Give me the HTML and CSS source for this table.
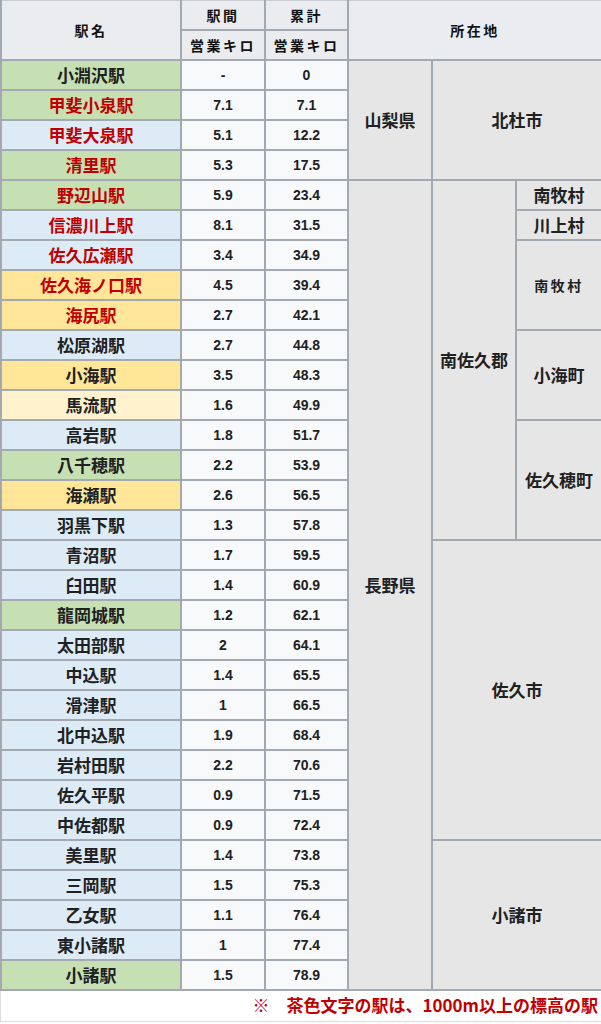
FILE: index.html
```html
<!DOCTYPE html>
<html lang="ja">
<head>
<meta charset="utf-8">
<title>小海線 駅一覧</title>
<link rel="stylesheet" href="styles.css">
</head>
<body>
<div class="wrap">
<table class="stations">
  <colgroup>
    <col class="c-name"><col class="c-num"><col class="c-num2"><col class="c-pref"><col class="c-city"><col class="c-town">
  </colgroup>
  <thead>
    <tr>
      <th rowspan="2" class="h">駅名</th>
      <th class="h">駅間</th>
      <th class="h">累計</th>
      <th rowspan="2" colspan="3" class="h wide">所在地</th>
    </tr>
    <tr>
      <th class="h">営業キロ</th>
      <th class="h">営業キロ</th>
    </tr>
  </thead>
  <tbody>
    <tr><td class="st g">小淵沢駅</td><td class="n">-</td><td class="n">0</td><td rowspan="4" class="loc">山梨県</td><td rowspan="4" colspan="2" class="loc">北杜市</td></tr>
    <tr><td class="st g red">甲斐小泉駅</td><td class="n">7.1</td><td class="n">7.1</td></tr>
    <tr><td class="st b red">甲斐大泉駅</td><td class="n">5.1</td><td class="n">12.2</td></tr>
    <tr><td class="st g red">清里駅</td><td class="n">5.3</td><td class="n">17.5</td></tr>
    <tr><td class="st g red">野辺山駅</td><td class="n">5.9</td><td class="n">23.4</td><td rowspan="27" class="loc">長野県</td><td rowspan="12" class="loc">南佐久郡</td><td class="loc">南牧村</td></tr>
    <tr><td class="st b red">信濃川上駅</td><td class="n">8.1</td><td class="n">31.5</td><td class="loc">川上村</td></tr>
    <tr><td class="st b red">佐久広瀬駅</td><td class="n">3.4</td><td class="n">34.9</td><td rowspan="3" class="loc small">南牧村</td></tr>
    <tr><td class="st y red">佐久海ノ口駅</td><td class="n">4.5</td><td class="n">39.4</td></tr>
    <tr><td class="st y red">海尻駅</td><td class="n">2.7</td><td class="n">42.1</td></tr>
    <tr><td class="st b">松原湖駅</td><td class="n">2.7</td><td class="n">44.8</td><td rowspan="3" class="loc">小海町</td></tr>
    <tr><td class="st y">小海駅</td><td class="n">3.5</td><td class="n">48.3</td></tr>
    <tr><td class="st ly">馬流駅</td><td class="n">1.6</td><td class="n">49.9</td></tr>
    <tr><td class="st b">高岩駅</td><td class="n">1.8</td><td class="n">51.7</td><td rowspan="4" class="loc">佐久穂町</td></tr>
    <tr><td class="st g">八千穂駅</td><td class="n">2.2</td><td class="n">53.9</td></tr>
    <tr><td class="st y">海瀬駅</td><td class="n">2.6</td><td class="n">56.5</td></tr>
    <tr><td class="st b">羽黒下駅</td><td class="n">1.3</td><td class="n">57.8</td></tr>
    <tr><td class="st b">青沼駅</td><td class="n">1.7</td><td class="n">59.5</td><td rowspan="10" colspan="2" class="loc">佐久市</td></tr>
    <tr><td class="st b">臼田駅</td><td class="n">1.4</td><td class="n">60.9</td></tr>
    <tr><td class="st g">龍岡城駅</td><td class="n">1.2</td><td class="n">62.1</td></tr>
    <tr><td class="st b">太田部駅</td><td class="n">2</td><td class="n">64.1</td></tr>
    <tr><td class="st b">中込駅</td><td class="n">1.4</td><td class="n">65.5</td></tr>
    <tr><td class="st b">滑津駅</td><td class="n">1</td><td class="n">66.5</td></tr>
    <tr><td class="st b">北中込駅</td><td class="n">1.9</td><td class="n">68.4</td></tr>
    <tr><td class="st b">岩村田駅</td><td class="n">2.2</td><td class="n">70.6</td></tr>
    <tr><td class="st b">佐久平駅</td><td class="n">0.9</td><td class="n">71.5</td></tr>
    <tr><td class="st b">中佐都駅</td><td class="n">0.9</td><td class="n">72.4</td></tr>
    <tr><td class="st b">美里駅</td><td class="n">1.4</td><td class="n">73.8</td><td rowspan="5" colspan="2" class="loc">小諸市</td></tr>
    <tr><td class="st b">三岡駅</td><td class="n">1.5</td><td class="n">75.3</td></tr>
    <tr><td class="st b">乙女駅</td><td class="n">1.1</td><td class="n">76.4</td></tr>
    <tr><td class="st b">東小諸駅</td><td class="n">1</td><td class="n">77.4</td></tr>
    <tr><td class="st g">小諸駅</td><td class="n">1.5</td><td class="n">78.9</td></tr>
  </tbody>
</table>
<p class="note">※　茶色文字の駅は、1000m以上の標高の駅</p>
</div>
</body>
</html>
```

FILE: styles.css
```css
html, body {
  margin: 0;
  padding: 0;
  background: #ffffff;
}

body {
  font-family: "Noto Sans CJK JP", "Noto Sans", sans-serif;
  color: #202122;
  width: 601px;
}

.wrap {
  width: 601px;
  border-left: 1px solid #dcdcdc;
  border-bottom: 1px solid #dcdcdc;
  box-sizing: border-box;
}

.stations {
  border-collapse: collapse;
  table-layout: fixed;
  width: 601px;
  margin-left: -1px;
}

.c-name { width: 180px; }
.c-num { width: 84px; }
.c-num2 { width: 83px; }
.c-pref { width: 84px; }
.c-city { width: 84px; }
.c-town { width: 86px; }

.stations th,
.stations td {
  border: 2px solid #a2a9b1;
  padding: 0;
  text-align: center;
  vertical-align: middle;
  height: 28px;
  line-height: 20px;
  font-weight: 700;
}

.stations th {
  background: #eaecf0;
  font-size: 14px;
  letter-spacing: 2.5px;
  color: #111111;
}

.stations tr:first-child th {
  border-top: 1px solid #c8ccd1;
}

.st {
  font-size: 17px;
}

.red { color: #c00000; }

.g { background: #c6e0b4; }
.b { background: #ddebf7; }
.y { background: #ffe699; }
.ly { background: #fff2cc; }

.n {
  background: #f8f9fa;
  font-family: "Liberation Sans", Arial, sans-serif;
  font-size: 14px;
}

.loc {
  background: #e6e6e6;
  font-size: 17px;
}

.loc.small {
  font-size: 14px;
  letter-spacing: 2.5px;
}

.note {
  margin: 0;
  height: 30px;
  line-height: 28px;
  text-align: right;
  padding-right: 3px;
  color: #c00000;
  font-weight: 700;
  font-size: 17px;
}
```
